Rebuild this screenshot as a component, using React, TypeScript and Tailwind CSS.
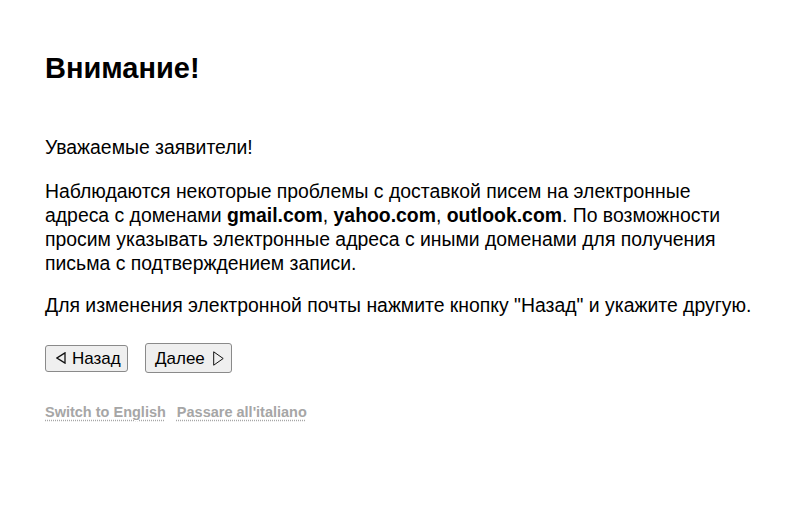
export default function App() {
  return (
    <div className="min-h-[506px] bg-white px-[45px] pt-[50px] text-black font-['Liberation_Sans',Arial,sans-serif]">
      <h1 className="text-[29px] font-bold leading-[36px]">Внимание!</h1>

      <p className="mt-[49px] text-[19.4px] leading-[24px]">Уважаемые заявители!</p>

      <p className="mt-[20px] text-[19.4px] leading-[24px] whitespace-nowrap">
        Наблюдаются некоторые проблемы с доставкой писем на электронные
        <br />
        адреса с доменами <b>gmail.com</b>, <b>yahoo.com</b>, <b>outlook.com</b>. По возможности
        <br />
        просим указывать электронные адреса с иными доменами для получения
        <br />
        письма с подтверждением записи.
      </p>

      <p className="mt-[18px] text-[19.4px] leading-[24px] whitespace-nowrap">
        Для изменения электронной почты нажмите кнопку "Назад" и укажите другую.
      </p>

      <div className="mt-[26px] flex items-center gap-[17px]">
        <button
          type="button"
          className="flex h-[27px] w-[83px] items-center gap-[6px] rounded-[3px] border border-[#8a8a8a] bg-[#efefef] pl-[10px] text-[17px] leading-none"
        >
          <svg width="10" height="12" viewBox="0 0 10 12" aria-hidden>
            <path d="M9 0.9 L1 6 L9 11.1 Z" fill="none" stroke="#111" strokeWidth="1.3" strokeLinejoin="miter" />
          </svg>
          <span>Назад</span>
        </button>
        <button
          type="button"
          className="flex h-[30px] w-[87px] items-center gap-[8px] rounded-[3px] border border-[#8a8a8a] bg-[#efefef] pl-[9px] text-[17px] leading-none"
        >
          <span>Далее</span>
          <svg width="11" height="15" viewBox="0 0 11 15" aria-hidden>
            <path d="M0.7 0.8 L10.2 7.5 L0.7 14.2 Z" fill="none" stroke="#111" strokeWidth="1" strokeLinejoin="miter" />
          </svg>
        </button>
      </div>

      <div className="mt-[29px] flex gap-[11px] text-[14.5px] font-bold text-[#a6a6a6]">
        <a href="#" className="underline decoration-dotted underline-offset-[3px]">
          Switch to English
        </a>
        <a href="#" className="underline decoration-dotted underline-offset-[3px]">
          Passare all'italiano
        </a>
      </div>
    </div>
  );
}
